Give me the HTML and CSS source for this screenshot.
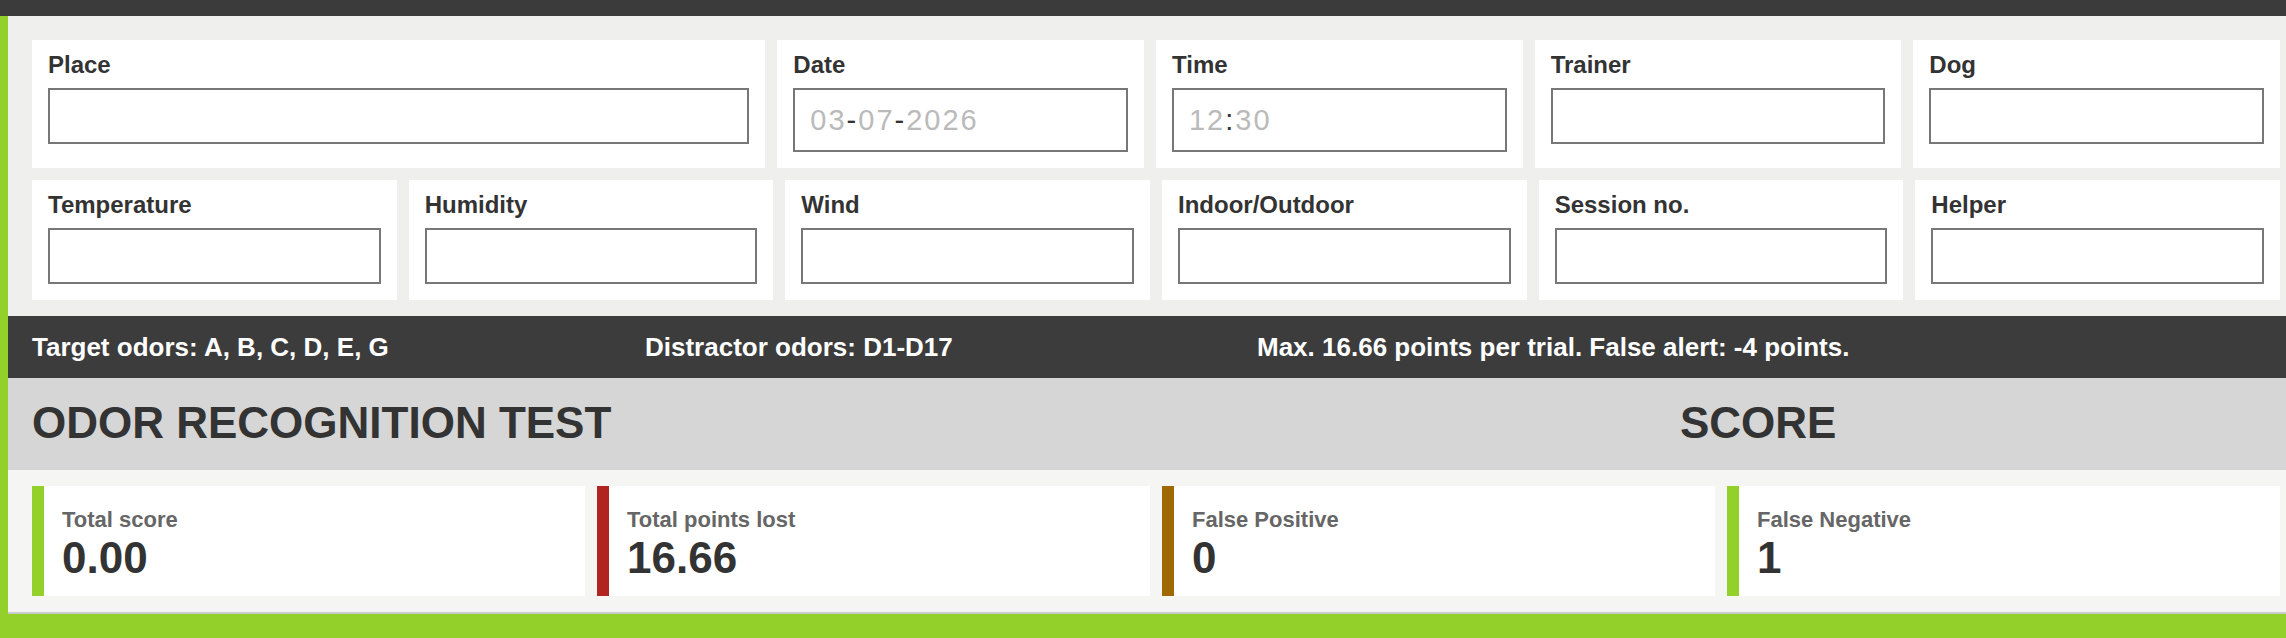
FILE: index.html
```html
<!DOCTYPE html>
<html lang="en">
<head>
    <meta charset="UTF-8">
    <meta name="viewport" content="width=device-width, initial-scale=1.0">
    <title>Odor Recognition Test</title>
    <link rel="stylesheet" href="styles.css">
</head>
<body>
    <div class="top-bar"></div>
    <div class="page">
        <!-- Session details -->
        <div class="details">
            <div class="details-row first">
                <div class="field">
                    <label for="place">Place</label>
                    <input type="text" id="place">
                </div>
                <div class="field">
                    <label>Date</label>
                    <div class="fake-input"><span class="dim">03</span>-<span class="dim">07</span>-<span class="dim">2026</span></div>
                </div>
                <div class="field">
                    <label>Time</label>
                    <div class="fake-input"><span class="dim">12</span>:<span class="dim">30</span></div>
                </div>
                <div class="field">
                    <label for="trainer">Trainer</label>
                    <input type="text" id="trainer">
                </div>
                <div class="field">
                    <label for="dog">Dog</label>
                    <input type="text" id="dog">
                </div>
            </div>
            <div class="details-row">
                <div class="field">
                    <label for="temperature">Temperature</label>
                    <input type="text" id="temperature">
                </div>
                <div class="field">
                    <label for="humidity">Humidity</label>
                    <input type="text" id="humidity">
                </div>
                <div class="field">
                    <label for="wind">Wind</label>
                    <input type="text" id="wind">
                </div>
                <div class="field">
                    <label for="indoor">Indoor/Outdoor</label>
                    <input type="text" id="indoor">
                </div>
                <div class="field">
                    <label for="session">Session no.</label>
                    <input type="text" id="session">
                </div>
                <div class="field">
                    <label for="helper">Helper</label>
                    <input type="text" id="helper">
                </div>
            </div>
        </div>

        <div class="info-bar">
            <span>Target odors: A, B, C, D, E, G</span>
            <span>Distractor odors: D1-D17</span>
            <span>Max. 16.66 points per trial. False alert: -4 points.</span>
        </div>

        <div class="heading">
            <h1>ODOR RECOGNITION TEST</h1>
            <h1>SCORE</h1>
        </div>

        <!-- Score summary -->
        <div class="stats">
            <div class="stat good">
                <div class="stat-label">Total score</div>
                <div class="stat-value">0.00</div>
            </div>
            <div class="stat bad">
                <div class="stat-label">Total points lost</div>
                <div class="stat-value">16.66</div>
            </div>
            <div class="stat warn">
                <div class="stat-label">False Positive</div>
                <div class="stat-value">0</div>
            </div>
            <div class="stat good">
                <div class="stat-label">False Negative</div>
                <div class="stat-value">1</div>
            </div>
        </div>
    </div>
</body>
</html>
```

FILE: styles.css
```css
body {
    font-family: "Liberation Sans", Arial, sans-serif;
    background-color: #94d02a;
    margin: 0;
    padding: 0;
    color: #333;
}
.top-bar {
    height: 16px;
    background-color: #3b3b3b;
}
.page {
    margin-left: 8px;
    border-bottom: 2px solid #cbcbcb;
}

/* Detail fields */
.details {
    background-color: #efefed;
    padding: 24px 6px 16px 24px;
    display: grid;
    gap: 12px;
}
.details-row {
    display: grid;
    grid-template-columns: repeat(6, minmax(0, 1fr));
    gap: 12px;
}
.details-row.first {
    grid-template-columns: minmax(0, 2fr) repeat(4, minmax(0, 1fr));
}
.field {
    background-color: #fff;
    padding: 12px 16px 16px 16px;
}
label {
    display: block;
    font-size: 24px;
    font-weight: bold;
    line-height: 26px;
    margin-bottom: 10px;
    color: #333;
}
input[type="text"] {
    display: block;
    width: 100%;
    height: 56px;
    box-sizing: border-box;
    border: 2px solid #777;
    border-radius: 0;
    background: #fff;
    font-family: inherit;
    font-size: 22px;
    padding: 0 14px;
}
.fake-input {
    height: 64px;
    box-sizing: border-box;
    border: 2px solid #777;
    background: #fff;
    padding: 0 15px;
    display: flex;
    align-items: center;
    font-size: 29px;
    letter-spacing: 2px;
    color: #333;
}
.fake-input .dim {
    color: #bababa;
}

/* Rules bar */
.info-bar {
    height: 62px;
    background-color: #3c3c3c;
    color: #fff;
    padding: 0 6px 0 24px;
    display: grid;
    grid-template-columns: 613px 612px 1fr;
    align-items: center;
    font-size: 26px;
    font-weight: bold;
}

.heading {
    height: 92px;
    background-color: #d6d6d6;
    padding: 0 6px 2px 24px;
    box-sizing: border-box;
    display: grid;
    grid-template-columns: 1fr 600px;
    align-items: center;
}
.heading h1 {
    margin: 0;
    font-size: 44px;
    color: #333;
}

/* Score cards */
.stats {
    background-color: #f5f5f3;
    padding: 16px 6px 16px 24px;
    display: grid;
    grid-template-columns: repeat(4, 1fr);
    gap: 12px;
}
.stat {
    height: 110px;
    box-sizing: border-box;
    background-color: #fff;
    border-left: 12px solid #94d02a;
    padding: 21px 18px 0 18px;
}
.stat.bad {
    border-left-color: #b22420;
}
.stat.warn {
    border-left-color: #a06800;
}
.stat-label {
    font-size: 22px;
    line-height: 25px;
    font-weight: bold;
    color: #666;
}
.stat-value {
    margin-top: 1px;
    font-size: 44px;
    line-height: 50px;
    font-weight: bold;
    color: #333;
}
```
